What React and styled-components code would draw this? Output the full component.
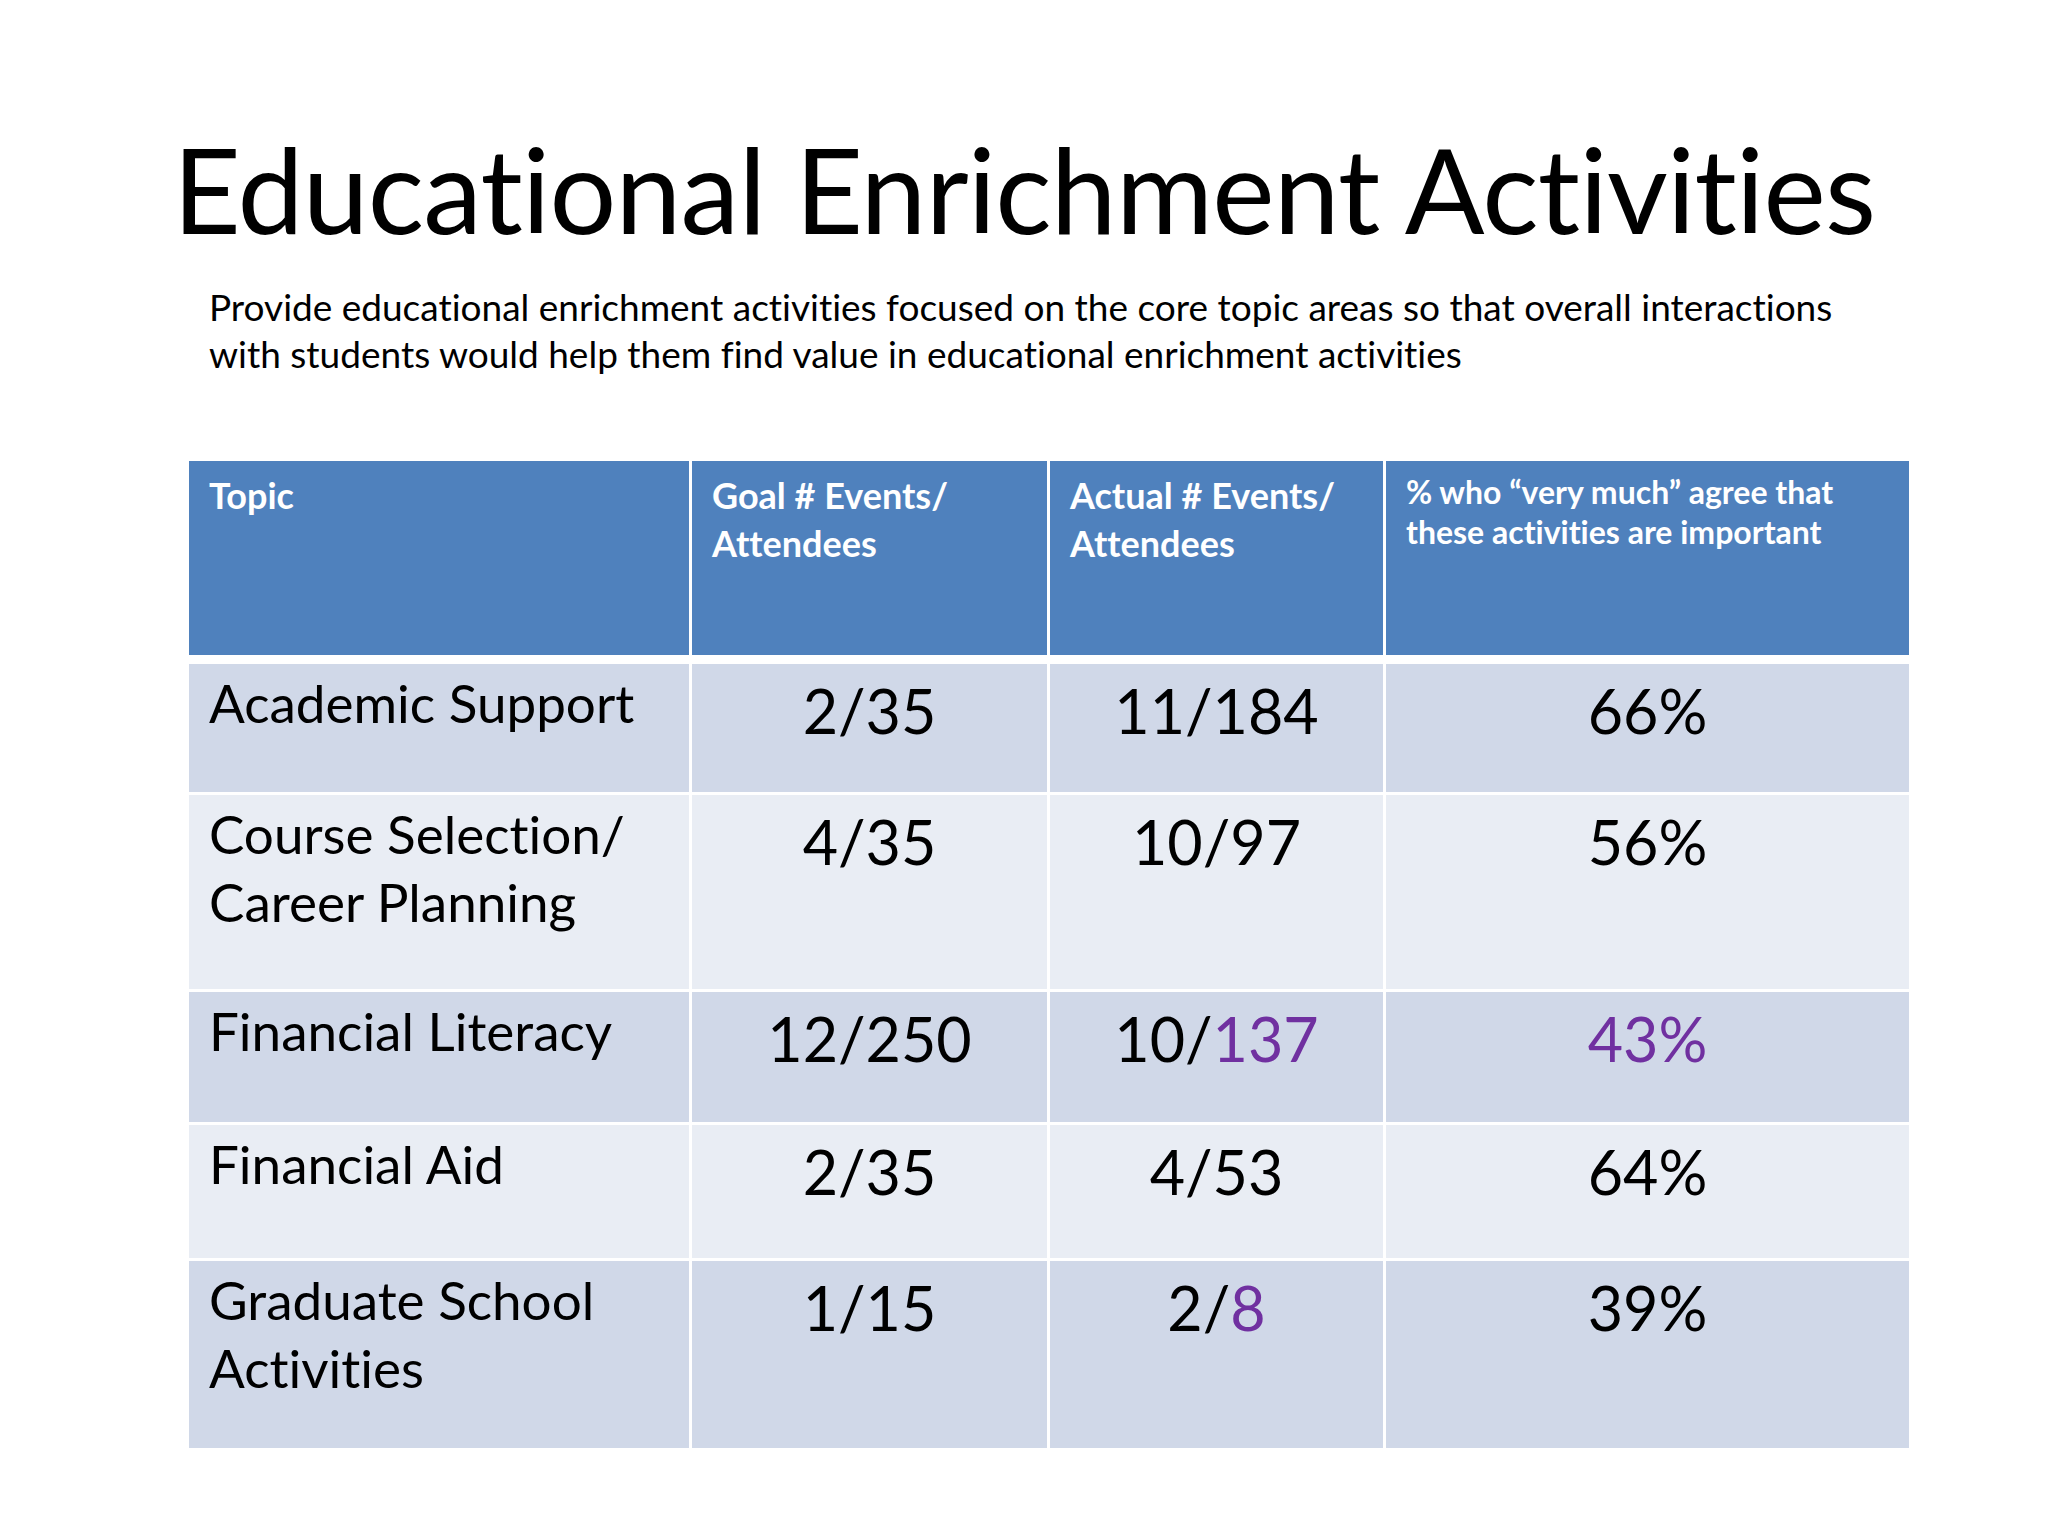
import React from 'react';
import styled, { createGlobalStyle } from 'styled-components';

const rows = [
    { topic: ['Academic Support'], goal: '2/35', actual: ['11/184'], pct: '66%', height: 128 },
    { topic: ['Course Selection/', 'Career Planning'], goal: '4/35', actual: ['10/97'], pct: '56%', height: 194 },
    { topic: ['Financial Literacy'], goal: '12/250', actual: ['10/', '137'], pct: '43%', pctHot: true, height: 130 },
    { topic: ['Financial Aid'], goal: '2/35', actual: ['4/53'], pct: '64%', height: 133 },
    { topic: ['Graduate School', 'Activities'], goal: '1/15', actual: ['2/', '8'], pct: '39%', height: 187 },
];

export default function App() {
    return (
        <>
            <GlobalStyle />
            <Slide>
                <Title>Educational Enrichment Activities</Title>
                <Lead>
                    Provide educational enrichment activities focused on the core topic areas so that overall interactions
                    <br />
                    with students would help them find value in educational enrichment activities
                </Lead>
                <Table>
                    <HeadRow>
                        <HeadCell>Topic</HeadCell>
                        <HeadCell>Goal # Events/<br />Attendees</HeadCell>
                        <HeadCell>Actual # Events/<br />Attendees</HeadCell>
                        <HeadCell $small>% who “very much” agree that<br />these activities are important</HeadCell>
                    </HeadRow>
                    {rows.map((r, i) => (
                        <BodyRow key={r.topic[0]} $height={r.height} $band={i % 2 === 0}>
                            <TopicCell>
                                {r.topic.map((line, j) => (
                                    <React.Fragment key={line}>
                                        {j > 0 && <br />}
                                        {line}
                                    </React.Fragment>
                                ))}
                            </TopicCell>
                            <NumCell>{r.goal}</NumCell>
                            <NumCell>
                                {r.actual[0]}
                                {r.actual[1] && <Hot>{r.actual[1]}</Hot>}
                            </NumCell>
                            <NumCell>{r.pctHot ? <Hot>{r.pct}</Hot> : r.pct}</NumCell>
                        </BodyRow>
                    ))}
                </Table>
            </Slide>
        </>
    );
}

const GlobalStyle = createGlobalStyle`
    html, body {
        margin: 0;
        padding: 0;
        background: #fff;
    }

    body {
        font-family: Lato, "Open Sans", sans-serif;
        font-variant-ligatures: none;
        color: #000;
    }
`;

const Slide = styled.div`
    width: 2048px;
    height: 1536px;
    box-sizing: border-box;
    padding-top: 118px;
    overflow: hidden;
`;

const Title = styled.h1`
    margin: 0;
    text-align: center;
    font-size: 118px;
    font-weight: 400;
    line-height: 142px;
    letter-spacing: -0.8px;
`;

const Lead = styled.p`
    margin: 23px 0 0 209px;
    font-size: 37px;
    line-height: 47px;
    white-space: nowrap;
`;

const Table = styled.div`
    margin: 84px 0 0 189px;
    width: 1720px;
    display: flex;
    flex-direction: column;
    gap: 3px;
`;

const cols = '500px 355px 333px 523px';

const HeadRow = styled.div`
    display: grid;
    grid-template-columns: ${cols};
    column-gap: 3px;
    height: 194px;
    margin-bottom: 6px;
`;

const HeadCell = styled.div`
    background: #4f81bd;
    color: #fff;
    font-weight: 700;
    font-size: ${p => (p.$small ? '32px' : '36px')};
    line-height: ${p => (p.$small ? '40px' : '48px')};
    padding: ${p => (p.$small ? '11px' : '10px')} 20px 0;
`;

const BodyRow = styled.div`
    display: grid;
    grid-template-columns: ${cols};
    column-gap: 3px;
    height: ${p => p.$height}px;

    & > div {
        background: ${p => (p.$band ? '#d0d8e8' : '#e9edf4')};
    }
`;

const TopicCell = styled.div`
    font-size: 53px;
    line-height: 68px;
    padding: 5px 20px 0;
`;

const NumCell = styled.div`
    font-size: 61px;
    line-height: 73px;
    padding: 10px 20px 0;
    text-align: center;
`;

const Hot = styled.span`
    color: #7030a0;
`;
